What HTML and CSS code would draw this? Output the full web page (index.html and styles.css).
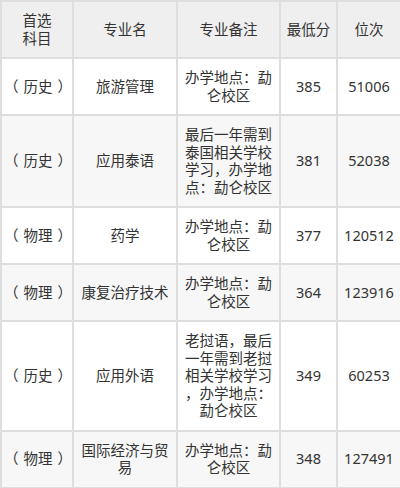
FILE: index.html
```html
<!DOCTYPE html>
<html lang="zh-CN">
<head>
<meta charset="utf-8">
<title>专业录取</title>
<link rel="stylesheet" href="styles.css">
</head>
<body>
<table class="scores">
  <colgroup>
    <col class="c1"><col class="c2"><col class="c3"><col class="c4"><col class="c5">
  </colgroup>
  <thead>
    <tr><th>首选<br>科目</th><th>专业名</th><th>专业备注</th><th>最低分</th><th>位次</th></tr>
  </thead>
  <tbody>
    <tr><td class="subj">（<span class="sj">历史</span>）</td><td>旅游管理</td><td class="note">办学地点：勐仑校区</td><td>385</td><td>51006</td></tr>
    <tr class="alt"><td class="subj">（<span class="sj">历史</span>）</td><td>应用泰语</td><td class="note">最后一年需到泰国相关学校学习，办学地点：勐仑校区</td><td>381</td><td>52038</td></tr>
    <tr><td class="subj">（<span class="sj">物理</span>）</td><td>药学</td><td class="note">办学地点：勐仑校区</td><td>377</td><td>120512</td></tr>
    <tr class="alt"><td class="subj">（<span class="sj">物理</span>）</td><td>康复治疗技术</td><td class="note">办学地点：勐仑校区</td><td>364</td><td>123916</td></tr>
    <tr><td class="subj">（<span class="sj">历史</span>）</td><td>应用外语</td><td class="note">老挝语，最后一年需到老挝相关学校学习，办学地点：勐仑校区</td><td>349</td><td>60253</td></tr>
    <tr class="alt"><td class="subj">（<span class="sj">物理</span>）</td><td>国际经济与贸易</td><td class="note">办学地点：勐仑校区</td><td>348</td><td>127491</td></tr>
  </tbody>
</table>
</body>
</html>
```
FILE: styles.css
```css
html, body {
  margin: 0;
  padding: 0;
  background: #ffffff;
}
.scores {
  width: 400px;
  table-layout: fixed;
  border-collapse: collapse;
  font-family: "Noto Sans", "Noto Sans CJK SC", sans-serif;
  font-size: 14.5px;
  line-height: 17.5px;
  color: #333333;
}
.c1 { width: 72px; }
.c2 { width: 104px; }
.c3 { width: 103px; }
.c4 { width: 57px; }
.c5 { width: 64px; }
.scores th,
.scores td {
  border: 2px solid #dedede;
  padding: 10px 5px;
  text-align: center;
  vertical-align: middle;
  font-weight: normal;
}
.scores th {
  background: #efefef;
}
.scores .alt td {
  background: #f7f7f7;
}
.scores .subj {
  white-space: nowrap;
  padding-left: 2px;
  padding-right: 2px;
}
.scores .sj {
  margin: 0 5px;
}
.scores .note {
  line-break: anywhere;
  padding-left: 7px;
  padding-right: 7px;
}
```
